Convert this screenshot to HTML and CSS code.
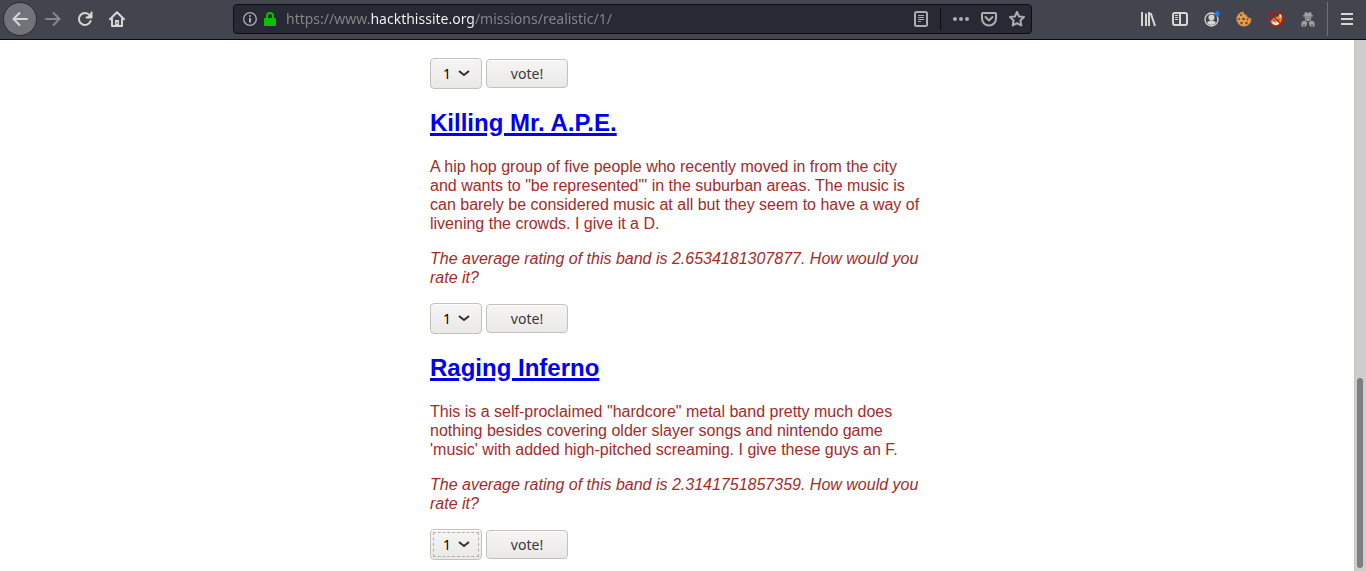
FILE: index.html
```html
<!DOCTYPE html>
<html lang="en">
<head>
<meta charset="utf-8">
<title>Realistic Mission 1</title>
<link rel="stylesheet" href="styles.css">
</head>
<body>
<header class="toolbar">
  <nav class="nav">
    <button class="tool back" aria-label="Back"><svg width="16" height="16" viewBox="0 0 16 16"><path d="M15 8H2M7.500 2L1.500 8l6 6"/></svg></button>
    <button class="tool forward" aria-label="Forward"><svg width="16" height="16" viewBox="0 0 16 16"><path d="M1 8h13M8.500 2l6 6-6 6"/></svg></button>
    <button class="tool" aria-label="Reload"><svg width="16" height="16" viewBox="0 0 16 16"><path d="M12.600 4.200A6 6 0 1 0 13.600 10M14.500 1.500v5h-5"/><path class="fill" d="M15 1v6H9z"/></svg></button>
    <button class="tool" aria-label="Home"><svg width="16" height="16" viewBox="0 0 16 16"><path d="M1 8.300L8 1.300l7 7M3 7.500V15h10V7.500"/><path class="fill" d="M6 9h4v6H6z"/><path class="knob" d="M8 11.500v1"/></svg></button>
  </nav>
  <div class="urlbar">
    <button class="small" aria-label="Site information"><svg width="14" height="14" viewBox="0 0 14 14"><circle class="thin" cx="7" cy="7" r="6.300"/><path class="info" d="M7 6v4.500M7 3.200v1.600"/></svg></button>
    <button class="small lock" aria-label="Connection secure"><svg width="12" height="14" viewBox="0 0 12 14"><path d="M3 7V4a3 3 0 0 1 6 0v3"/><rect class="fill" x="0" y="6" width="12" height="8" rx="1"/></svg></button>
    <input class="address" type="text" aria-label="Address" value="https://www.hackthissite.org/missions/realistic/1/" spellcheck="false">
    <button class="small" aria-label="Reader view"><svg width="14" height="16" viewBox="0 0 14 16"><rect x="1" y="1" width="12" height="14" rx="1.500"/><path class="line" d="M4 4.500h6M4 6.500h6M4 8.500h6M4 10.500h3"/></svg></button>
    <span class="divider"></span>
    <button class="small" aria-label="Page actions"><svg width="16" height="16" viewBox="0 0 16 16"><g class="fill"><circle cx="2" cy="8" r="2"/><circle cx="8" cy="8" r="2"/><circle cx="14" cy="8" r="2"/></g></svg></button>
    <button class="small pocket" aria-label="Save to Pocket"><svg width="16" height="16" viewBox="0 0 16 16"><path d="M2 2h12a1 1 0 0 1 1 1v4.500a7 7 0 0 1-14 0V3a1 1 0 0 1 1-1z"/><path d="M4.500 6L8 9.500 11.500 6"/></svg></button>
    <button class="small star" aria-label="Bookmark"><svg width="16" height="16" viewBox="0 0 16 16"><path d="M8 1l2.100 4.500 4.900.6-3.600 3.400.9 5L8 12.100l-4.300 2.400.9-5L1 6.100l4.900-.6z"/></svg></button>
  </div>
  <div class="extras">
    <button class="tool" aria-label="Library"><svg width="16" height="16" viewBox="0 0 16 16"><path class="butt" d="M2 1v14M6 2.500V15M9 1v14M10.700 2l4.300 13"/></svg></button>
    <button class="tool" aria-label="Sidebars"><svg width="16" height="16" viewBox="0 0 16 16"><rect x="1" y="2" width="14" height="12" rx="2"/><path class="butt" d="M8 2v12"/><path class="line" d="M3 4.500h3M3 6.500h3M3 8.500h3"/></svg></button>
    <button class="tool" aria-label="Account"><svg width="16" height="16" viewBox="0 0 16 16"><circle class="thin" cx="7.500" cy="8.500" r="6.500"/><circle class="fill" cx="7.500" cy="6.500" r="3"/><path class="fill" d="M3 12q1-2.500 4.500-2.500T12 12q-1.500 2-4.500 2T3 12z"/><circle cx="13.300" cy="2.800" r="2.700" fill="#0a84ff" stroke="#42454d" stroke-width=".4" class="dot"/></svg></button>
    <button class="tool" aria-label="Cookie manager"><svg width="16" height="16" viewBox="0 0 16 16"><path d="M7 .8Q8 4 10.500 4.200q.5 3 4.700 3.500A7.300 7.300 0 1 1 7 .8z" fill="#dfa052" stroke="#bd7a32" stroke-width=".6"/><g fill="#71431e" stroke="none"><circle cx="5" cy="4" r="1.100"/><circle cx="3" cy="8" r="1.100"/><circle cx="7.500" cy="8" r="1.300"/><circle cx="5.500" cy="12" r="1.200"/><circle cx="10.500" cy="12" r="1.200"/><circle cx="11.500" cy="8.500" r="1"/><circle cx="12" cy="1.500" r=".8"/><circle cx="14.500" cy="4" r=".8"/></g></svg></button>
    <button class="tool" aria-label="Proxy disabled"><svg width="16" height="16" viewBox="0 0 16 16"><path d="M4 8.500L6.500 6l4-.5L12 2.500l2.500 1L14 8l-1.500 4-4 2.500-4-1-2-3z" fill="#ef8b2b" stroke="none"/><path d="M3.500 11.500l2-1 2 1.500 2.500-2 2.500 1-2 2.500-3.500 1z" fill="#f6e6cb" stroke="none"/><path d="M11.800 3l1.700 1-.5 2.500-1.800-1z" fill="#f6e6cb" stroke="none"/><path d="M5.500 9l1 .8M10 9.500l1.200-.8" stroke="#40302a" stroke-width="1"/><circle cx="8" cy="8" r="7.300" stroke="#cc1014" stroke-width="1.300"/><path d="M2.800 2.800l10.400 10.400" stroke="#cc1014" stroke-width="1.300"/></svg></button>
    <button class="tool spy" aria-label="User agent"><svg width="14" height="16" viewBox="0 0 14 16"><g class="fill"><path d="M4 1l3 1 3-1 .8 3.200H12v1.300H2V4.200h1.200z"/><path d="M3.500 5.400h7L9.800 9 7 10.300 4.200 9z"/><path d="M1 10.500L4 9.500l2.300 2L5 15.500H.5v-3zM13 10.500l-3-1-2.300 2L9 15.500h4.500v-3z"/></g><path class="hole" d="M4.700 7.300h1.500M7.800 7.300h1.500M3 13v2M11 13v2"/></svg></button>
  </div>
  <div class="menu"><button class="tool" aria-label="Menu"><svg width="14" height="14" viewBox="0 0 14 14"><path class="butt" d="M1 2h12M1 7h12M1 12h12"/></svg></button></div>
</header>
<div class="viewport">
  <main class="page">
    <div class="bands">
      <form class="vote">
        <span class="pick"><select class="rating" aria-label="Rating"><option>1</option><option>2</option><option>3</option><option>4</option><option>5</option></select><svg class="chevron" width="12" height="7" viewBox="0 0 12 7"><path d="M1 1l5 4 5-4"/></svg></span>
        <button class="submit" type="button">vote!</button>
      </form>
      <h2 class="name"><a href="#ape">Killing Mr. A.P.E.</a></h2>
      <p class="review">A hip hop group of five people who recently moved in from the city and wants to "be represented"' in the suburban areas. The music is can barely be considered music at all but they seem to have a way of livening the crowds. I give it a D.</p>
      <p class="review average">The average rating of this band is 2.6534181307877. How would you rate it?</p>
      <form class="vote">
        <span class="pick"><select class="rating" aria-label="Rate Killing Mr. A.P.E."><option>1</option><option>2</option><option>3</option><option>4</option><option>5</option></select><svg class="chevron" width="12" height="7" viewBox="0 0 12 7"><path d="M1 1l5 4 5-4"/></svg></span>
        <button class="submit" type="button">vote!</button>
      </form>
      <h2 class="name"><a href="#inferno">Raging Inferno</a></h2>
      <p class="review">This is a self-proclaimed "hardcore" metal band pretty much does nothing besides covering older slayer songs and nintendo game 'music' with added high-pitched screaming. I give these guys an F.</p>
      <p class="review average">The average rating of this band is 2.3141751857359. How would you rate it?</p>
      <form class="vote">
        <span class="pick focused"><select class="rating" aria-label="Rate Raging Inferno"><option>1</option><option>2</option><option>3</option><option>4</option><option>5</option></select><svg class="chevron" width="12" height="7" viewBox="0 0 12 7"><path d="M1 1l5 4 5-4"/></svg></span>
        <button class="submit" type="button">vote!</button>
      </form>
    </div>
  </main>
  <div class="scrollbar"><div class="thumb"></div></div>
</div>
</body>
</html>
```
FILE: styles.css
```css
* { box-sizing: border-box; }
body {
  margin: 0;
  height: 100vh;
  display: flex;
  flex-direction: column;
  overflow: hidden;
  background: #fff;
  font-family: "Liberation Sans", Arial, sans-serif;
}

/* Browser toolbar */
.toolbar {
  flex: none;
  height: 40px;
  display: flex;
  align-items: center;
  padding: 0 3px 2px 3px;
  background: #42454d;
  border-bottom: 1px solid #0c0c0d;
}
.toolbar button {
  border: 0;
  padding: 0;
  background: none;
  color: #d6d6d3;
  display: flex;
  align-items: center;
  justify-content: center;
}
.toolbar svg { fill: none; stroke: currentColor; stroke-width: 2; stroke-linecap: round; stroke-linejoin: round; }
.toolbar .fill { fill: currentColor; stroke: none; }
.toolbar .thin { stroke-width: 1.3; }
.toolbar .info { stroke-width: 2; stroke-linecap: butt; }
.toolbar .line { stroke-width: 1; stroke-linecap: butt; }
.toolbar .butt { stroke-linecap: butt; }
.toolbar .knob { stroke: #42454d; stroke-width: 1; }
.toolbar .hole { stroke: #42454d; stroke-width: 1; stroke-linecap: butt; }
.nav { display: flex; align-items: center; }
.toolbar .tool { width: 32px; height: 32px; }
.toolbar .back {
  width: 34px;
  height: 34px;
  border: 1px solid #2c2d31;
  border-radius: 50%;
  background: #71737a;
}
.toolbar .forward { color: #86878a; }
.urlbar {
  flex: none;
  width: 799px;
  height: 30px;
  margin-left: auto;
  padding: 0 6px 0 9px;
  display: flex;
  align-items: center;
  border: 1px solid #0d0e11;
  border-radius: 4px;
  background: #272934;
}
.toolbar .small { flex: none; color: #adadb0; }
.toolbar .lock { margin-left: 7px; color: #12bc00; }
.address {
  flex: 1;
  min-width: 0;
  height: 26px;
  margin-left: 10px;
  padding: 0;
  border: 0;
  outline: 0;
  font: 14px "Noto Sans", sans-serif;
  color: transparent;
  caret-color: #fff;
  background: linear-gradient(90deg, #85878b 85px, #f9f9fa 85px, #f9f9fa 189px, #85878b 189px);
  background-clip: text;
  -webkit-background-clip: text;
}
.divider { width: 1px; height: 22px; margin: 0 12px; background: #0d0e11; }
.toolbar .pocket { margin-left: 12px; }
.toolbar .star { margin-left: 12px; }
.extras { display: flex; margin-left: auto; padding-right: 3px; }
.toolbar .spy { color: #a0a1a3; }
.menu { height: 34px; display: flex; align-items: center; padding-left: 3px; border-left: 1px solid #6e7075; }

/* Page */
.viewport { flex: 1; min-height: 0; display: flex; }
.page { flex: 1; min-width: 0; overflow: hidden; padding-top: 18px; }
.bands { max-width: 494px; margin: 0 auto; }
.vote { display: flex; align-items: center; gap: 4px; }
.pick { position: relative; display: flex; }
.rating, .submit {
  font: 14px/20px "Noto Sans", sans-serif;
  border: 1px solid #c5c0ba;
  border-radius: 4px;
  background: linear-gradient(#f6f5f4, #ebe9e8);
  box-shadow: inset 0 1px #fff;
}
.rating { appearance: none; width: 52px; height: 31px; padding: 0 12px; color: #000; }
.submit { width: 82px; height: 29px; padding: 0; color: #36393b; }
.chevron {
  position: absolute;
  right: 12px;
  top: 12px;
  pointer-events: none;
  fill: none;
  stroke: #2e3436;
  stroke-width: 2;
}
.focused .rating { outline: 1px dashed #b3b0ad; outline-offset: -4px; }
.name { margin: 20px 0; font-size: 24px; line-height: 28px; }
.name a { color: #00e; text-decoration-thickness: 3px; }
.review { margin: 0 0 16px; font-size: 16px; line-height: 19px; color: #a52a2a; }
.average { font-style: italic; }

.scrollbar {
  flex: none;
  width: 12px;
  display: flex;
  flex-direction: column;
  justify-content: flex-end;
  align-items: center;
  padding: 0 1px 3px 0;
  background: #cdcdcd;
  border-left: 1px solid #c9c2bd;
}
.thumb { width: 6px; height: 36%; border-radius: 3px; background: #7b7f7f; }
```
